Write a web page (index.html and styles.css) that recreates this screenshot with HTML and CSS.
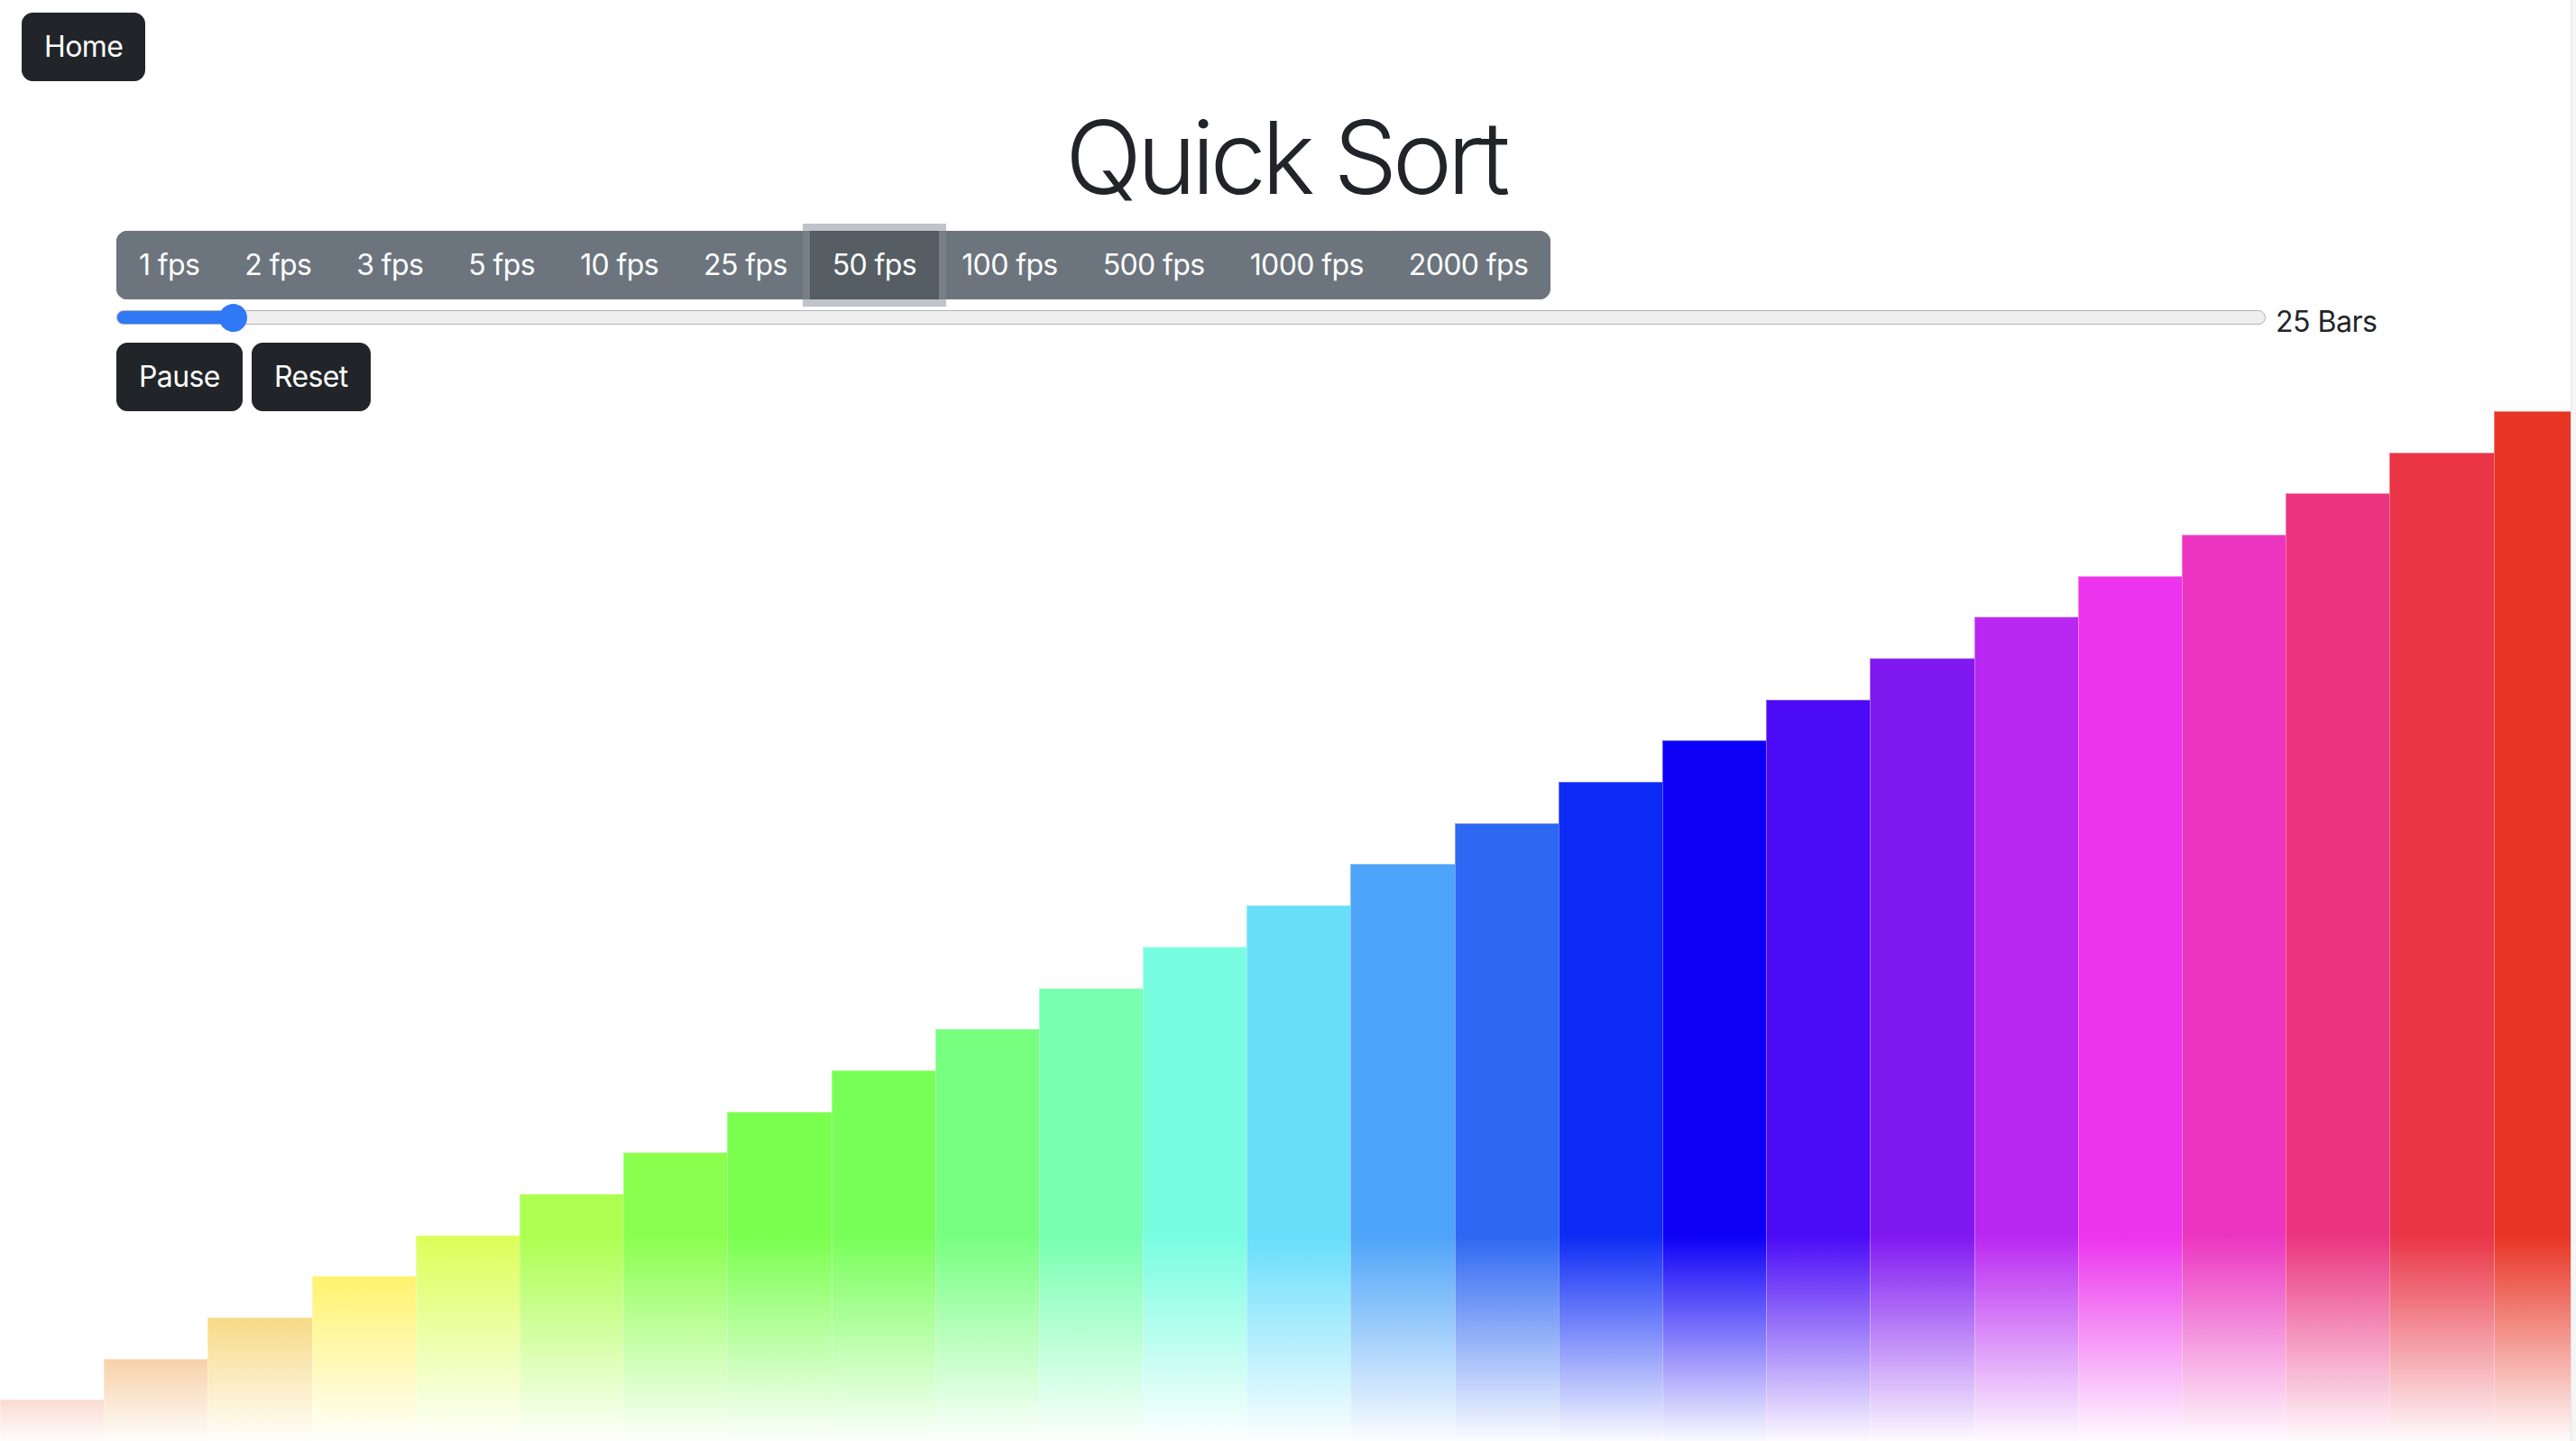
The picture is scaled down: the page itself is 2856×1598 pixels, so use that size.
FILE: index.html
```html
<!DOCTYPE html>
<html lang="en">
<head>
<meta charset="utf-8">
<title>Quick Sort</title>
<link rel="stylesheet" href="styles.css">
</head>
<body>
<div class="viewport">
  <main class="page">
    <header class="topbar">
      <button class="btn btn-dark">Home</button>
    </header>
    <h1 class="title">Quick Sort</h1>
    <section class="controls">
      <div class="btn-group">
        <button class="btn btn-secondary">1 fps</button>
        <button class="btn btn-secondary">2 fps</button>
        <button class="btn btn-secondary">3 fps</button>
        <button class="btn btn-secondary">5 fps</button>
        <button class="btn btn-secondary">10 fps</button>
        <button class="btn btn-secondary">25 fps</button>
        <button class="btn btn-secondary active">50 fps</button>
        <button class="btn btn-secondary">100 fps</button>
        <button class="btn btn-secondary">500 fps</button>
        <button class="btn btn-secondary">1000 fps</button>
        <button class="btn btn-secondary">2000 fps</button>
      </div>
      <div class="slider-row">
        <input class="range" type="range" min="5" max="420" value="25">
        <span class="range-label">25 Bars</span>
      </div>
      <div class="actions">
        <button class="btn btn-dark">Pause</button>
        <button class="btn btn-dark">Reset</button>
      </div>
    </section>
    <div class="chart">
      <div class="bar" style="height:4%;background:#e8582e"></div>
      <div class="bar" style="height:8%;background:#ec8f2b"></div>
      <div class="bar" style="height:12%;background:#f3c237"></div>
      <div class="bar" style="height:16%;background:#fff04a"></div>
      <div class="bar" style="height:20%;background:#dcff57"></div>
      <div class="bar" style="height:24%;background:#adff50"></div>
      <div class="bar" style="height:28%;background:#8aff4d"></div>
      <div class="bar" style="height:32%;background:#7aff4f"></div>
      <div class="bar" style="height:36%;background:#77ff58"></div>
      <div class="bar" style="height:40%;background:#77ff80"></div>
      <div class="bar" style="height:44%;background:#78ffb0"></div>
      <div class="bar" style="height:48%;background:#78fde0"></div>
      <div class="bar" style="height:52%;background:#68defb"></div>
      <div class="bar" style="height:56%;background:#4ea4f8"></div>
      <div class="bar" style="height:60%;background:#2d67f2"></div>
      <div class="bar" style="height:64%;background:#0d2bf5"></div>
      <div class="bar" style="height:68%;background:#0e00f6"></div>
      <div class="bar" style="height:72%;background:#4a0af5"></div>
      <div class="bar" style="height:76%;background:#8018f0"></div>
      <div class="bar" style="height:80%;background:#b928f2"></div>
      <div class="bar" style="height:84%;background:#ec33ed"></div>
      <div class="bar" style="height:88%;background:#eb35c0"></div>
      <div class="bar" style="height:92%;background:#eb3480"></div>
      <div class="bar" style="height:96%;background:#e93546"></div>
      <div class="bar" style="height:100%;background:#e83424"></div>
      <div class="fade"></div>
    </div>
  </main>
  <div class="scrollbar"></div>
</div>
</body>
</html>
```
FILE: styles.css
```css
html, body {
  margin: 0;
  padding: 0;
  background: #fff;
}
body {
  font-family: Inter, "Noto Sans", "Liberation Sans", sans-serif;
  color: #212529;
  font-size: 32px;
  overflow: hidden;
}
.viewport {
  display: flex;
  width: 2856px;
  height: 1598px;
}
.page {
  width: 2850px;
  flex: 0 0 2850px;
  height: 1598px;
  display: flex;
  flex-direction: column;
  overflow: hidden;
}
.scrollbar {
  flex: 0 0 6px;
  background: #f5f5f5;
  border-left: 1px solid #e4e4e4;
  box-sizing: border-box;
}
.topbar {
  padding: 14px 0 0 24px;
  display: flex;
}
.btn {
  font-family: inherit;
  font-size: 32px;
  line-height: 48px;
  letter-spacing: -0.6px;
  padding: 13px 24px;
  border: 1px solid transparent;
  border-radius: 12px;
  color: #fff;
  cursor: pointer;
  margin: 0;
  white-space: nowrap;
}
.btn-dark {
  background: #212529;
  border-color: #212529;
}
.title {
  margin: 17px 0 15px;
  text-align: center;
  font-size: 112px;
  font-weight: 300;
  line-height: 134px;
  letter-spacing: -5.5px;
}
.controls {
  padding-left: 129px;
  display: flex;
  flex-direction: column;
  align-items: flex-start;
}
.btn-group {
  display: flex;
  background: #6c757d;
  border-radius: 12px;
}
.btn-secondary {
  background: #6c757d;
  border-color: #6c757d;
  border-radius: 0;
}
.btn-secondary:first-child {
  border-radius: 12px 0 0 12px;
}
.btn-secondary:last-child {
  border-radius: 0 12px 12px 0;
}
.btn-secondary.active {
  background: #565e64;
  border-color: #51585e;
  position: relative;
  z-index: 1;
  box-shadow: 0 0 0 8px rgba(130, 138, 145, 0.5);
}
.slider-row {
  height: 48px;
  display: flex;
  align-items: center;
  gap: 11px;
}
.range {
  -webkit-appearance: none;
  appearance: none;
  width: 2383px;
  height: 31px;
  margin: -8px 0 0 0;
  padding: 0;
  background: transparent;
}
.range::-webkit-slider-runnable-track {
  box-sizing: border-box;
  height: 16px;
  border-radius: 8px;
  border: 1px solid #b3b3b3;
  background: linear-gradient(to right, #2f78f6 0, #2f78f6 5.4%, #efefef 5.4%);
}
.range::-webkit-slider-thumb {
  -webkit-appearance: none;
  appearance: none;
  width: 31px;
  height: 31px;
  border-radius: 50%;
  background: #2f78f6;
  border: none;
  margin-top: -8.5px;
}
.range-label {
  font-size: 32px;
  line-height: 48px;
  letter-spacing: -0.5px;
  margin-top: 1px;
}
.actions {
  display: flex;
  gap: 10px;
}
.chart {
  flex: 1 1 auto;
  width: 2880px;
  display: flex;
  align-items: flex-end;
  position: relative;
}
.bar {
  flex: 0 0 115.2px;
  box-sizing: border-box;
  box-shadow: inset 1px 1px 0 rgba(255, 255, 255, 0.35);
}
.fade {
  position: absolute;
  left: 0;
  right: 0;
  bottom: 0;
  height: 228px;
  background: linear-gradient(to bottom, rgba(255, 255, 255, 0), rgba(255, 255, 255, 0.98));
  pointer-events: none;
}
```
